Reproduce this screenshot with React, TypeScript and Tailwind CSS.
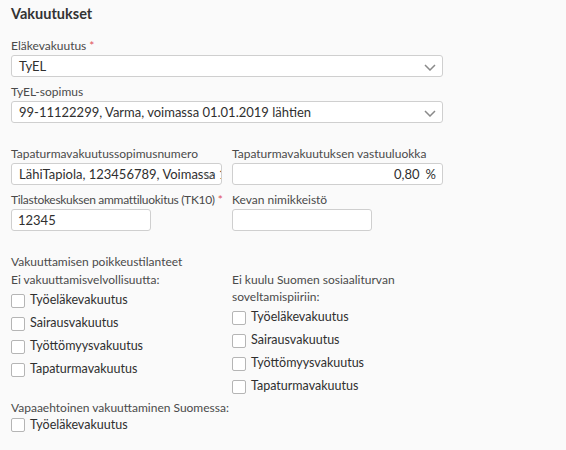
import React from "react";

const font = { fontFamily: 'Lato, "Noto Sans", sans-serif' };

const Chevron = () => (
  <svg
    width="12"
    height="7"
    viewBox="0 0 12 7"
    className="absolute right-[6px] top-[8px]"
  >
    <path d="M1 1 L6 6 L11 1" fill="none" stroke="#8a8a8a" strokeWidth="1.5" />
  </svg>
);

const Label = ({ text, required, tight }: { text: string; required?: boolean; tight?: boolean }) => (
  <div
    className={`text-[12px] leading-[16px] text-[#4a4a4a] mb-[1px] whitespace-nowrap ${tight ? "tracking-[-0.3px]" : ""}`}
  >
    {text}
    {required && <span className="text-[#e0525a] ml-[3px]">*</span>}
  </div>
);

const Select = ({ value, className }: { value: string; className?: string }) => (
  <div
    className={`relative h-[22px] bg-white border border-[#cfcfcf] rounded-[3px] ${className ?? ""}`}
  >
    <div className="overflow-hidden whitespace-nowrap pl-[7px] pr-[14px] text-[13px] leading-[20px] text-[#2f2f2f]">
      {value}
    </div>
    <Chevron />
  </div>
);

const Input = ({ children, className }: { children?: React.ReactNode; className?: string }) => (
  <div
    className={`h-[22px] bg-white border border-[#cfcfcf] rounded-[3px] px-[6px] text-[13px] leading-[20px] text-[#2f2f2f] ${className ?? ""}`}
  >
    {children}
  </div>
);

const Check = ({ text }: { text: string }) => (
  <div className="flex items-center h-[23px]">
    <div className="w-[14px] h-[14px] bg-white border border-[#b5b5b5] rounded-[2px] mr-[5px]" />
    <span className="text-[12.5px] text-[#2f2f2f]">{text}</span>
  </div>
);

const vakuutukset = ["Työeläkevakuutus", "Sairausvakuutus", "Työttömyysvakuutus", "Tapaturmavakuutus"];

export default function App() {
  return (
    <div style={font} className="w-[566px] h-[450px] bg-[#fafafa] pl-[11px] pt-[4px] overflow-hidden">
      <div className="w-[432px]">
        <h2 className="text-[14.5px] leading-[20px] font-bold text-[#333]">Vakuutukset</h2>

        <div className="mt-[14px]">
          <Label text="Eläkevakuutus" required />
          <Select value="TyEL" />
        </div>
        <div className="mt-[7px]">
          <Label text="TyEL-sopimus" />
          <Select value="99-11122299, Varma, voimassa 01.01.2019 lähtien" />
        </div>

        <div className="grid grid-cols-2 gap-x-[10px] mt-[23px]">
          <div>
            <Label text="Tapaturmavakuutussopimusnumero" />
            <Select value="LähiTapiola, 123456789, Voimassa 1.1.2019 lähtien" />
          </div>
          <div>
            <Label text="Tapaturmavakuutuksen vastuuluokka" />
            <Input className="text-right">
              0,80<span className="ml-[6px]">%</span>
            </Input>
          </div>
          <div className="mt-[7px]">
            <Label text="Tilastokeskuksen ammattiluokitus (TK10)" required tight />
            <Input className="w-[140px]">12345</Input>
          </div>
          <div className="mt-[7px]">
            <Label text="Kevan nimikkeistö" />
            <Input className="w-[140px]" />
          </div>
        </div>

        <div className="mt-[22px] text-[12px] leading-[18px] text-[#4a4a4a]">
          Vakuuttamisen poikkeustilanteet
        </div>
        <div className="grid grid-cols-2 gap-x-[10px]">
          <div>
            <div className="text-[12px] leading-[18px] text-[#4a4a4a]">Ei vakuuttamisvelvollisuutta:</div>
            {vakuutukset.map((v) => (
              <Check key={v} text={v} />
            ))}
          </div>
          <div>
            <div className="text-[12px] leading-[17px] text-[#4a4a4a] w-[180px] mb-[1px]">
              Ei kuulu Suomen sosiaaliturvan soveltamispiiriin:
            </div>
            {vakuutukset.map((v) => (
              <Check key={v} text={v} />
            ))}
          </div>
        </div>

        <div className="mt-[2px] text-[12px] leading-[16px] text-[#4a4a4a]">
          Vapaaehtoinen vakuuttaminen Suomessa:
        </div>
        <div className="flex items-center h-[18px]">
          <div className="w-[14px] h-[14px] bg-white border border-[#b5b5b5] rounded-[2px] mr-[5px]" />
          <span className="text-[12.5px] text-[#2f2f2f]">Työeläkevakuutus</span>
        </div>
      </div>
    </div>
  );
}
